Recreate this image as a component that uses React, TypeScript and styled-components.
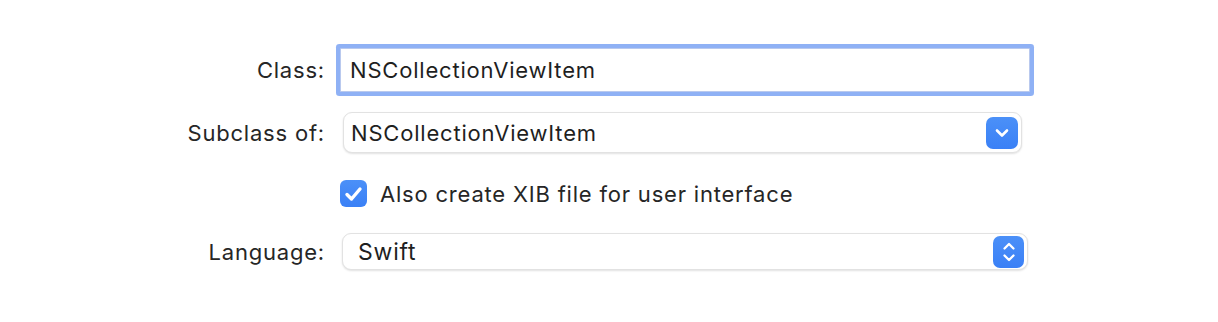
import styled, { createGlobalStyle } from "styled-components";

const GlobalStyle = createGlobalStyle`
  html, body {
    margin: 0;
    padding: 0;
    background: #ffffff;
  }
  body {
    font-family: Inter, "Noto Sans", "Liberation Sans", sans-serif;
    font-size: 22px;
    letter-spacing: 0.8px;
    -webkit-font-smoothing: antialiased;
  }
`;

const Form = styled.div`
  width: 1218px;
  height: 322px;
  box-sizing: border-box;
  padding-top: 48px;
  display: flex;
  flex-direction: column;
`;

const Row = styled.div<{ $height: number; $top?: number }>`
  display: flex;
  align-items: center;
  height: ${(p) => p.$height}px;
  margin-top: ${(p) => p.$top ?? 0}px;
`;

const Label = styled.div`
  width: 325px;
  flex: none;
  text-align: right;
  color: #262626;
  padding-right: 15px;
  box-sizing: content-box;
`;

const TextField = styled.div`
  width: 690px;
  height: 44px;
  box-sizing: border-box;
  border: 1px solid #b9c9ee;
  background: #ffffff;
  box-shadow: 0 0 0 4px #8fb1f5;
  border-radius: 1px;
  display: flex;
  align-items: center;
  padding-left: 9px;
  color: #1f1f1f;
`;

const Popup = styled.div<{ $width: number; $height: number; $inset: number; $textPad?: number; $size?: number }>`
  width: ${(p) => p.$width}px;
  height: ${(p) => p.$height}px;
  margin-left: ${(p) => p.$inset}px;
  box-sizing: border-box;
  border-radius: 9px;
  background: #ffffff;
  border: 1px solid #e2e2e2;
  box-shadow: 0 1px 2px rgba(0, 0, 0, 0.12);
  display: flex;
  align-items: center;
  justify-content: space-between;
  padding: 0 3px 0 ${(p) => p.$textPad ?? 7}px;
  font-size: ${(p) => p.$size ?? 22}px;
  color: #1f1f1f;
`;

const PopupButton = styled.div<{ $size: number }>`
  width: ${(p) => p.$size}px;
  height: 32px;
  border-radius: 7px;
  background: linear-gradient(#4b90f8, #3a80f6);
  display: flex;
  align-items: center;
  justify-content: center;
`;

const CheckRow = styled.label`
  display: flex;
  align-items: center;
  gap: 13px;
  color: #262626;
`;

const CheckBox = styled.div`
  width: 27px;
  height: 27px;
  border-radius: 6px;
  background: linear-gradient(#4b90f8, #3a80f6);
  display: flex;
  align-items: center;
  justify-content: center;
`;

const ChevronDown = () => (
  <svg width="14" height="10" viewBox="0 0 14 10">
    <path d="M2 2.5 L7 7.5 L12 2.5" fill="none" stroke="#fff" strokeWidth="2.6" strokeLinecap="round" strokeLinejoin="round" />
  </svg>
);

const ChevronUpDown = () => (
  <svg width="14" height="22" viewBox="0 0 14 22">
    <path d="M2.5 7.5 L7 3 L11.5 7.5" fill="none" stroke="#fff" strokeWidth="2.3" strokeLinecap="round" strokeLinejoin="round" />
    <path d="M2.5 14.5 L7 19 L11.5 14.5" fill="none" stroke="#fff" strokeWidth="2.3" strokeLinecap="round" strokeLinejoin="round" />
  </svg>
);

const Check = () => (
  <svg width="19" height="16" viewBox="0 0 19 16">
    <path d="M3 8.5 L7.5 13 L16 3" fill="none" stroke="#fff" strokeWidth="3.4" strokeLinecap="round" strokeLinejoin="round" />
  </svg>
);

export default function App() {
  return (
    <>
      <GlobalStyle />
      <Form>
        <Row $height={44}>
          <Label>Class:</Label>
          <TextField>NSCollectionViewItem</TextField>
        </Row>
        <Row $height={41} $top={20}>
          <Label>Subclass of:</Label>
          <Popup $width={679} $height={41} $inset={3}>
            <span>NSCollectionViewItem</span>
            <PopupButton $size={32}>
              <ChevronDown />
            </PopupButton>
          </Popup>
        </Row>
        <Row $height={27} $top={27}>
          <Label />
          <CheckRow>
            <CheckBox>
              <Check />
            </CheckBox>
            Also create XIB file for user interface
          </CheckRow>
        </Row>
        <Row $height={37} $top={26}>
          <Label>Language:</Label>
          <Popup $width={686} $height={37} $inset={2} $textPad={15} $size={23}>
            <span>Swift</span>
            <PopupButton $size={31}>
              <ChevronUpDown />
            </PopupButton>
          </Popup>
        </Row>
      </Form>
    </>
  );
}
